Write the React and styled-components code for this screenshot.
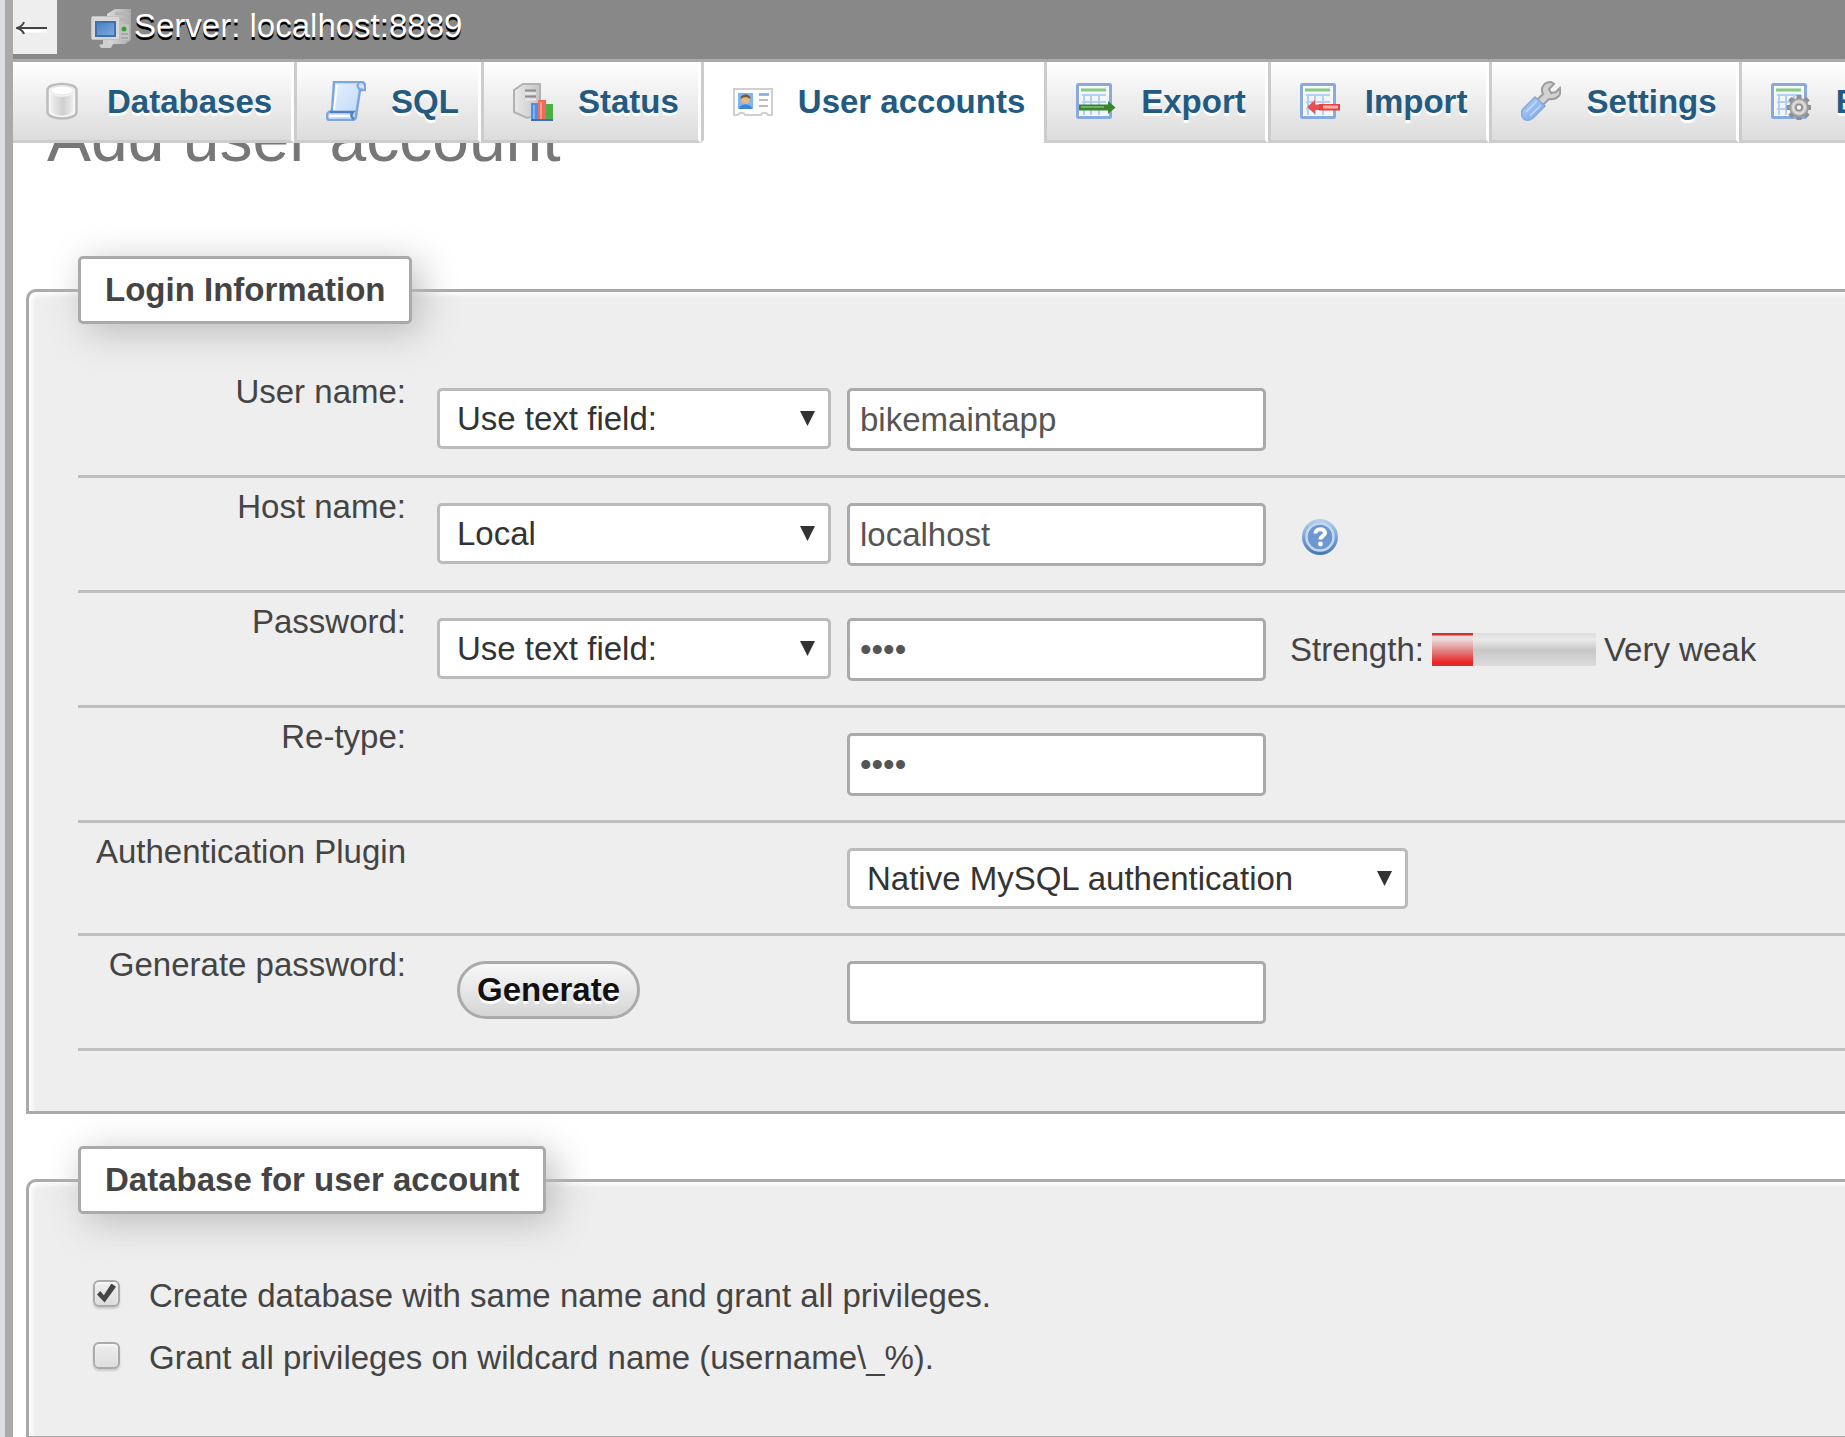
import React, { useState } from 'react';
import styled, { createGlobalStyle, css } from 'styled-components';

const GlobalStyle = createGlobalStyle`
  *, *::before, *::after { box-sizing: border-box; }
  body {
    margin: 0;
    background: #fff;
    color: #444;
    font-family: "Liberation Sans", Arial, Helvetica, sans-serif;
    font-size: 33px;
    line-height: 38px;
  }
`;

const Shell = styled.div`
  display: grid;
  grid-template-columns: 5px 8px minmax(0, 1fr);
  height: 100vh;
  overflow: hidden;
`;

const NavEdge = styled.div`
  background: linear-gradient(to right, #d9dce1, #dfdfdf);
`;

const Resizer = styled.div`
  background: #aaa;
`;

const Content = styled.div`
  min-width: 0;
  overflow: hidden;
`;

const TopMenu = styled.header`
  position: relative;
  z-index: 1;
`;

const ServerBar = styled.div`
  display: flex;
  align-items: flex-start;
  height: 62px;
  background: #888;
  border-bottom: 3px solid #aaa;
`;

const CollapseButton = styled.button`
  display: grid;
  place-items: center;
  width: 44px;
  height: 54px;
  padding: 6px 6px 0 0;
  border: 0;
  background: #eee;
`;

const ServerLink = styled.a`
  display: flex;
  align-items: center;
  gap: 3px;
  height: 52px;
  margin-left: 34px;
  color: #fff;
  text-decoration: none;
  text-shadow: 0 3px 0 #000;
  svg { margin-top: 6px; }
`;

const TabList = styled.ul`
  display: flex;
  margin: 0;
  padding: 0;
  list-style: none;
`;

const Tab = styled.li`
  flex: none;
  border-left: 3px solid #ccc;
  border-right: 3px solid #fff;
  border-bottom: 3px solid #ccc;
  background: linear-gradient(#fff, #dcdcdc);
  &:first-child { border-left: 0; }
  ${(p) => p.$active && css`
    border-right: 0;
    border-bottom-color: #fff;
    background: #fff;
  `}
`;

const TabLink = styled.a`
  display: flex;
  align-items: center;
  gap: 25px;
  height: 78px;
  padding: 1px 19px 0 29px;
  color: #235a81;
  font-weight: bold;
  text-decoration: none;
  text-shadow: 0 3px 0 #fff;
  white-space: nowrap;
  svg { margin-bottom: 2px; }
`;

const Title = styled.h2`
  margin: -38px 0 85px 34px;
  color: #777;
  font-size: 66px;
  line-height: 66px;
  font-weight: normal;
`;

const Panel = styled.fieldset`
  margin: 0 -80px 32px 13px;
  padding: ${(p) => (p.$options ? '51px 49px 47px' : '39px 49px 60px')};
  border: 3px solid #aaa;
  border-radius: 10px 10px 0 0;
  background: #eee;
  box-shadow: 3px 3px 5px #fff inset;
`;

const PanelTitle = styled.legend`
  padding: 12px 24px;
  border: 3px solid #aaa;
  border-radius: 5px;
  background: #fff;
  font-weight: bold;
  box-shadow: 8px 8px 38px #bbb;
`;

const Row = styled.div`
  display: grid;
  grid-template-columns: 359px 410px minmax(0, 1fr);
  border-bottom: 3px solid #bfbfbf;
`;

const RowLabel = styled.label`
  padding: 10px 31px 0 0;
  text-align: right;
`;

const Cell = styled.div`
  display: flex;
  align-items: ${(p) => (p.$center ? 'center' : 'flex-start')};
  gap: 24px;
  padding: 25px 0 24px;
`;

const SelectWrap = styled.div`
  position: relative;
  width: ${(p) => (p.$wide ? '561px' : '394px')};
  &::after {
    content: "";
    position: absolute;
    top: 23px;
    right: 16px;
    width: 15px;
    height: 15px;
    background: #333;
    clip-path: polygon(0 0, 100% 0, 50% 100%);
    pointer-events: none;
  }
`;

const Select = styled.select`
  display: block;
  width: 100%;
  height: 61px;
  padding: 0 40px 0 17px;
  appearance: none;
  border: 3px solid #bbb;
  border-radius: 5px;
  background: #fff;
  color: #333;
  font: inherit;
`;

const TextInput = styled.input`
  width: 419px;
  height: 63px;
  padding: 0 10px;
  border: 3px solid #aaa;
  border-radius: 5px;
  background: #fff;
  color: #555;
  font: inherit;
`;

const HelpLink = styled.a`
  display: flex;
  padding: 4px 0 0 10px;
`;

const StrengthGroup = styled.label`
  display: flex;
  align-items: center;
  gap: 8px;
  white-space: nowrap;
`;

const track = 'linear-gradient(#ddd 0%, #eaeaea 20%, #c8c8c8 52%, #dcdcdc 100%)';
const fill = 'linear-gradient(#c33 0, #c33 2px, #f0d8d8 3px, #ecdcdc 6px, #e08080 55%, #e22 90%, #c33 100%)';

const StrengthMeter = styled.meter`
  appearance: none;
  display: block;
  width: 164px;
  height: 33px;
  border: 0;
  background: ${track};
  &::-webkit-meter-inner-element {
    display: block;
    position: static;
    height: 33px;
  }
  &::-webkit-meter-bar {
    display: block;
    position: static;
    height: 33px;
    margin: 0;
    border: 0;
    border-radius: 0;
    background: none;
  }
  &::-webkit-meter-optimum-value { height: 33px; background: ${fill}; }
`;

const PillButton = styled.button`
  height: 58px;
  margin-left: 20px;
  padding: 0 17px;
  border: 3px solid #aaa;
  border-radius: 30px;
  background: linear-gradient(#f8f8f8, #d5d5d5);
  color: #111;
  font: inherit;
  font-weight: bold;
  text-shadow: 0 3px 0 #fff;
`;

const Option = styled.label`
  display: flex;
  align-items: center;
  gap: 29px;
  height: 62px;
  padding-left: 15px;
`;

const Checkbox = styled.input`
  appearance: none;
  display: grid;
  place-items: center;
  flex: none;
  width: 27px;
  height: 27px;
  margin: 0 0 6px;
  border: 2px solid #aaa;
  border-radius: 6px;
  background: linear-gradient(#eee, #ddd);
  box-shadow: 0 2px 2px #ccc, inset 0 2px 2px #f8f8f8;
  &:checked::before {
    content: "";
    width: 19px;
    height: 19px;
    background: #444;
    clip-path: polygon(0 58%, 17% 40%, 36% 62%, 76% 0, 100% 17%, 40% 100%);
  }
`;

const Icon = ({ children }) => (
  <svg width="40" height="40" viewBox="0 0 40 40" aria-hidden="true">{children}</svg>
);

const ArrowIcon = () => (
  <svg width="32" height="18" viewBox="0 0 32 18" aria-hidden="true">
    <path d="M1 10H31" stroke="#fff" strokeWidth="3" />
    <path d="M1 7H31" stroke="#444" strokeWidth="2" />
    <path d="M8 1C7 4 4 6 1 7C4 8 7 10 8 13" fill="none" stroke="#444" strokeWidth="2" />
  </svg>
);

const ServerIcon = () => (
  <Icon>
    <defs>
      <linearGradient id="srvTower" x1="0" x2="1"><stop offset="0" stopColor="#dcdcdc" /><stop offset="1" stopColor="#aaa" /></linearGradient>
      <linearGradient id="srvScreen" x1="0" y1="0" x2="1" y2="1"><stop offset="0" stopColor="#4a80c4" /><stop offset="1" stopColor="#7caae0" /></linearGradient>
    </defs>
    <path d="M16 5 24 0H40V31L34 35H16Z" fill="url(#srvTower)" />
    <path d="M24 3H38V6H24ZM27 9H38V12H27Z" fill="#b5b5b5" />
    <path d="M30 15H38V31H30Z" fill="#c4c4c4" />
    <circle cx="33" cy="20" r="2.5" fill="#3c9f36" />
    <path d="M30 25H37M30 29H37" stroke="#a0a0a0" strokeWidth="1.5" />
    <rect x="0.5" y="7.5" width="28" height="23" rx="1.5" fill="#d8d8d8" stroke="#c0c0c0" />
    <rect x="4" y="12" width="21" height="16" fill="#3f6fae" />
    <rect x="6" y="14" width="17" height="12" fill="url(#srvScreen)" />
    <path d="M12 31H18V35H22L20 39H10L8 36L12 35Z" fill="#cfcfcf" />
  </Icon>
);

const DatabaseIcon = () => (
  <Icon>
    <defs><linearGradient id="dbBody" x1="0" x2="1"><stop offset="0" stopColor="#eee" /><stop offset="0.55" stopColor="#cfcfcf" /><stop offset="1" stopColor="#ececec" /></linearGradient></defs>
    <path d="M5.500 9C5.500 1 34.500 1 34.500 9V31C34.500 39.500 5.500 39.500 5.500 31Z" fill="#f6f6f6" stroke="#bcbcbc" strokeWidth="2.500" />
    <path d="M9 12C13 17 27 17 31 12V30C27 36 13 36 9 30Z" fill="url(#dbBody)" />
    <ellipse cx="20" cy="9.500" rx="11.500" ry="4.500" fill="#fff" stroke="#e4e4e4" />
  </Icon>
);

const SqlIcon = () => (
  <Icon>
    <defs><linearGradient id="sqlPaper" x1="0" y1="0" x2="1" y2="1"><stop offset="0" stopColor="#e8f2ff" /><stop offset="1" stopColor="#b9d6f6" /></linearGradient></defs>
    <path d="M8 1H35C39 1 40 5 39 9H34L30 35C30 38 28 39 26 39H4C0 39 0 33 3 31L6 30Z" fill="url(#sqlPaper)" stroke="#7ea6dc" strokeWidth="2.500" />
    <path d="M33 2C30 5 32 9 38 9" fill="none" stroke="#7ea6dc" strokeWidth="2" />
    <path d="M11 4 8 29" stroke="#fff" strokeWidth="2" />
    <path d="M4 31H27C24 34 26 37 28 38" fill="none" stroke="#4f80c4" strokeWidth="2.500" />
    <path d="M4 35H24" stroke="#fff" strokeWidth="2" />
  </Icon>
);

const StatusIcon = () => (
  <Icon>
    <defs><linearGradient id="stBox" x1="0" x2="1"><stop offset="0" stopColor="#eaeaea" /><stop offset="1" stopColor="#c4c4c4" /></linearGradient></defs>
    <path d="M1 9 10 3H27V34L14 37 1 31Z" fill="url(#stBox)" stroke="#b2b2b2" strokeWidth="2" />
    <path d="M12 9.500H23M12 15.500H23" stroke="#8c8c8c" strokeWidth="2" />
    <path d="M12 12.500H23M12 18.500H23" stroke="#eee" strokeWidth="1.500" />
    <rect x="18" y="22" width="7" height="17" fill="#4a8fe8" />
    <rect x="20" y="24" width="2" height="14" fill="#79b2f5" />
    <rect x="25" y="19" width="8" height="20" fill="#ee6a5a" />
    <rect x="27" y="21" width="2" height="17" fill="#ff9d8b" />
    <rect x="33" y="23" width="7" height="16" fill="#4cae45" />
    <rect x="18" y="38" width="22" height="2" fill="#3c6fc0" />
  </Icon>
);

const UsersIcon = () => (
  <Icon>
    <path d="M1 8H39V34H35C34 31 29 31 28 34H12C11 31 6 31 5 34H1Z" fill="#fff" stroke="#cfcfcf" strokeWidth="2" />
    <rect x="5" y="12" width="15" height="16" fill="#7db6f0" />
    <path d="M6 28C6 22 19 22 19 28Z" fill="#3f83d6" />
    <circle cx="12.500" cy="19" r="4" fill="#e3b78a" />
    <path d="M7.500 18C7 12 18 12 17.500 18C15 15.500 10 15.500 7.500 18Z" fill="#7b5430" />
    <path d="M26 13.500H36" stroke="#7fa6dd" strokeWidth="2.500" />
    <path d="M26 19H35M26 25H35" stroke="#bcbcbc" strokeWidth="2" />
  </Icon>
);

const TableSheet = () => (
  <>
    <rect x="1.500" y="3.500" width="33" height="33" rx="1" fill="#fff" stroke="#88abdf" strokeWidth="3" />
    <rect x="4" y="6" width="28" height="28" fill="#f1f6fd" />
    <path d="M5 9H30" stroke="#8ccb7c" strokeWidth="3" />
    <path d="M6 14H30M6 21H30M6 28H30M8 14V34M15 14V34M23 14V34" stroke="#b4cff0" strokeWidth="2" />
  </>
);

const ExportIcon = () => (
  <Icon>
    <TableSheet />
    <path d="M3 23.500H32V20L39.500 26.500 32 33V29.500H3Z" fill="#39842f" />
    <path d="M5 26H28" stroke="#7fc072" strokeWidth="1.500" />
  </Icon>
);

const ImportIcon = () => (
  <Icon>
    <TableSheet />
    <path d="M40 23H19V29.500H40Z" fill="#ee3b3b" />
    <path d="M23 26H38" stroke="#ffb5ac" strokeWidth="3" />
    <path d="M7 26 15 19V23.500H19V29H15V33Z" fill="#e85050" />
  </Icon>
);

const SettingsIcon = () => (
  <Icon>
    <defs><linearGradient id="setHandle" x1="0" y1="0" x2="1" y2="1"><stop offset="0" stopColor="#b4d3fa" /><stop offset="1" stopColor="#72a2e5" /></linearGradient></defs>
    <path d="M16 19 22 13C19 7 23 1 30 1L33 3 28 8 30 12 35 11 39 7C41 14 36 19 28 18L22 24Z" fill="#d2d2d2" stroke="#9d9d9d" strokeWidth="2" />
    <path d="M2 28 14 16 24 25 12 37C9 40 4 40 2 37C0 34 0 31 2 28Z" fill="url(#setHandle)" stroke="#83a9de" strokeWidth="1.500" />
    <path d="M5 31 16 20M9 35 20 24" stroke="#c3dbfb" strokeWidth="1.500" />
  </Icon>
);

const BinaryLogIcon = () => (
  <Icon>
    <TableSheet />
    <g stroke="#8f8f8f" strokeWidth="5">
      <path d="M28 14V39M15.500 26.500H40M19 17.500 37 35.500M37 17.500 19 35.500" />
    </g>
    <circle cx="28" cy="26.500" r="9" fill="#bdbdbd" stroke="#999" strokeWidth="1.500" />
    <circle cx="28" cy="26.500" r="6" fill="none" stroke="#dedede" strokeWidth="2" />
    <circle cx="28" cy="26.500" r="3" fill="#f6f6f6" stroke="#8c8c8c" strokeWidth="1.500" />
  </Icon>
);

const HelpIcon = () => (
  <Icon>
    <defs><linearGradient id="helpFill" x1="0" y1="0" x2="0" y2="1"><stop offset="0" stopColor="#b9d2ee" /><stop offset="1" stopColor="#4675b4" /></linearGradient></defs>
    <circle cx="20" cy="20" r="18" fill="url(#helpFill)" />
    <circle cx="20" cy="20" r="13.500" fill="#6c98cf" stroke="#c2d8f1" strokeWidth="2.500" />
    <path d="M15.500 16.500C15.500 11 25 11 25 16C25 19 20.500 19 20.500 22.500" fill="none" stroke="#fff" strokeWidth="4" />
    <circle cx="20.500" cy="27" r="2.400" fill="#fff" />
  </Icon>
);

const tabs = [
  { label: 'Databases', icon: DatabaseIcon },
  { label: 'SQL', icon: SqlIcon },
  { label: 'Status', icon: StatusIcon },
  { label: 'User accounts', icon: UsersIcon, active: true },
  { label: 'Export', icon: ExportIcon },
  { label: 'Import', icon: ImportIcon },
  { label: 'Settings', icon: SettingsIcon },
  { label: 'Binary log', icon: BinaryLogIcon },
];

function Dropdown({ options, wide, ...rest }) {
  return (
    <SelectWrap $wide={wide}>
      <Select {...rest}>
        {options.map((o) => <option key={o}>{o}</option>)}
      </Select>
    </SelectWrap>
  );
}

function FormRow({ label, htmlFor, control, center, children }) {
  return (
    <Row>
      <RowLabel htmlFor={htmlFor}>{label}</RowLabel>
      <Cell>{control}</Cell>
      <Cell $center={center}>{children}</Cell>
    </Row>
  );
}

export default function App() {
  const [user, setUser] = useState('bikemaintapp');
  const [host, setHost] = useState('localhost');
  const [generated, setGenerated] = useState('');

  return (
    <>
      <GlobalStyle />
      <Shell>
        <NavEdge />
        <Resizer />
        <Content>
          <TopMenu>
            <ServerBar>
              <CollapseButton type="button" aria-label="Hide panel"><ArrowIcon /></CollapseButton>
              <ServerLink href="#server"><ServerIcon />Server: localhost:8889</ServerLink>
            </ServerBar>
            <nav>
              <TabList>
                {tabs.map(({ label, icon: TabIcon, active }) => (
                  <Tab key={label} $active={active}>
                    <TabLink href="#tab" aria-current={active ? 'page' : undefined}><TabIcon />{label}</TabLink>
                  </Tab>
                ))}
              </TabList>
            </nav>
          </TopMenu>

          <main>
            <Title>Add user account</Title>
            <Panel>
              <PanelTitle>Login Information</PanelTitle>
              <FormRow
                label="User name:"
                htmlFor="username"
                control={<Dropdown aria-label="User name type" options={['Use text field:', 'Any user']} />}
              >
                <TextInput id="username" value={user} onChange={(e) => setUser(e.target.value)} />
              </FormRow>
              <FormRow
                label="Host name:"
                htmlFor="hostname"
                center
                control={<Dropdown aria-label="Host name type" defaultValue="Local" options={['Any host', 'Local', 'Use text field:']} />}
              >
                <TextInput id="hostname" value={host} onChange={(e) => setHost(e.target.value)} />
                <HelpLink href="#help" aria-label="Help"><HelpIcon /></HelpLink>
              </FormRow>
              <FormRow
                label="Password:"
                htmlFor="password"
                center
                control={<Dropdown aria-label="Password type" options={['Use text field:', 'No Password']} />}
              >
                <TextInput id="password" type="password" defaultValue="bike" />
                <StrengthGroup>
                  Strength:
                  <StrengthMeter min="0" max="4" value="1" />
                  <span>Very weak</span>
                </StrengthGroup>
              </FormRow>
              <FormRow label="Re-type:" htmlFor="retype">
                <TextInput id="retype" type="password" defaultValue="bike" />
              </FormRow>
              <FormRow label="Authentication Plugin" htmlFor="plugin">
                <Dropdown id="plugin" wide options={['Native MySQL authentication', 'SHA256 password authentication']} />
              </FormRow>
              <FormRow
                label="Generate password:"
                htmlFor="generated"
                control={<PillButton type="button">Generate</PillButton>}
              >
                <TextInput id="generated" value={generated} onChange={(e) => setGenerated(e.target.value)} />
              </FormRow>
            </Panel>

            <Panel $options>
              <PanelTitle>Database for user account</PanelTitle>
              <Option>
                <Checkbox type="checkbox" defaultChecked />
                Create database with same name and grant all privileges.
              </Option>
              <Option>
                <Checkbox type="checkbox" />
                Grant all privileges on wildcard name (username\_%).
              </Option>
            </Panel>
          </main>
        </Content>
      </Shell>
    </>
  );
}
